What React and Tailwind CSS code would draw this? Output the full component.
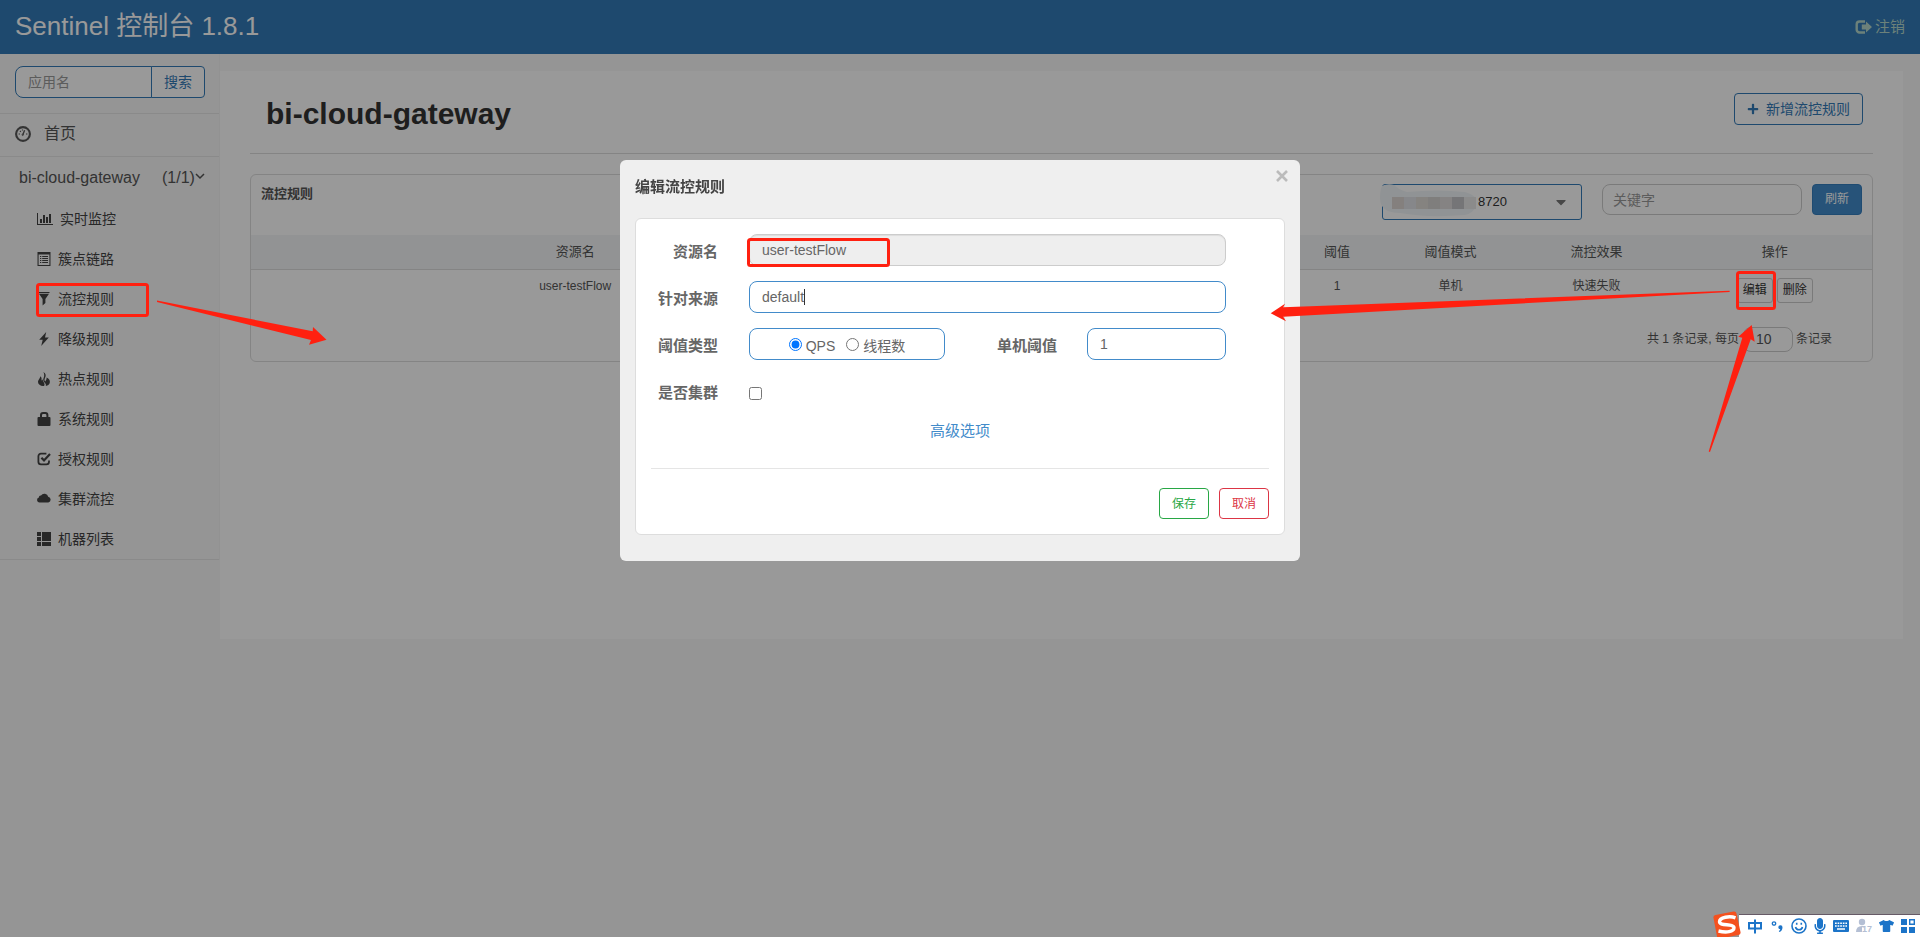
import React from "react";
import { FaPlus, FaCaretDown, FaTshirt, FaMicrophone } from "react-icons/fa";

function GaugeIcon({ className }) {
  return (
    <svg viewBox="0 0 16 16" className={className} fill="none" stroke="currentColor">
      <circle cx="8" cy="8" r="6.900" strokeWidth="2.100" />
      <path d="M7.800 8.800 9.600 4.200" strokeWidth="1.300" />
      <circle cx="7.700" cy="8.800" r="0.700" strokeWidth="0.900" />
      <path d="M3.600 8h1.400M5 5l.8.8M7.500 3.500v1.100M11 8h1.400" strokeWidth="1.200" />
    </svg>
  );
}

function ChartIcon({ className }) {
  return (
    <svg viewBox="0 0 16 14" className={className} fill="currentColor">
      <path d="M0 1h1v11h15v1H0zM3 7h2v4H3zM6 3h2v8H6zM9 5h2v6H9zM12 2h2v9h-2z" />
    </svg>
  );
}

function ListAltIcon({ className }) {
  return (
    <svg viewBox="0 0 14 14" className={className} fill="currentColor">
      <path fillRule="evenodd" d="M.5 0h13v14H.5zM1.600 2.400v10.500h10.800V2.400z" />
      <path d="M3 4h1.300v1H3zM5.200 4H11v1H5.200zM3 6h1.300v1H3zM5.200 6H11v1H5.200zM3 8h1.300v1H3zM5.200 8H11v1H5.200zM3 10h1.300v1H3zM5.200 10H11v1H5.200z" />
    </svg>
  );
}

function FunnelIcon({ className }) {
  return (
    <svg viewBox="0 0 14 14" className={className} fill="currentColor">
      <path d="M1.500 0h11v1h-11zM2 1.800h10L8.400 7v4L5.600 13.500V7z" />
    </svg>
  );
}

function FlashIcon({ className }) {
  return (
    <svg viewBox="0 0 14 14" className={className} fill="currentColor">
      <path d="M9.200 0 2.200 7.800h3.500L4.200 14l7.600-8.600H8z" />
    </svg>
  );
}

function FireIcon({ className }) {
  return (
    <svg viewBox="0 0 14 14" className={className} fill="currentColor">
      <path d="M6.400 0C9 1.500 9.300 3.800 8 6c-.7 1.300-.6 2.600.2 3.600.5-1.200 1.600-2.100 1.400-4.200C11.500 6 13 8 12.900 10c-.1 2.300-1.900 3.700-4.100 4 .4-1.200-.1-2.200-1-3.200C6.300 9.300 5.800 7.800 6.600 6 7.500 4 7.400 2 6.400 0z" />
      <path d="M3.500 4.200c1.400 1.500 1.200 3 .8 4.400.6-.2 1-.6 1.300-1.300.1 1.500.8 2.600 1.500 3.700.6 1 .6 2-.1 3C4 14.200 1.200 12.800 1 10c-.1-2.200 2-3.300 2.500-5.800z" />
    </svg>
  );
}

function LockIcon({ className }) {
  return (
    <svg viewBox="0 0 14 14" className={className} fill="currentColor">
      <path
        fillRule="evenodd"
        d="M3 5V3a3 3 0 0 1 3-3h2.400a3 3 0 0 1 3 3v2h1.100a1 1 0 0 1 1 1v7a1 1 0 0 1-1 1H1.500a1 1 0 0 1-1-1V6a1 1 0 0 1 1-1zM5 5h4.400V3.200A1.200 1.200 0 0 0 8.200 2h-2A1.200 1.200 0 0 0 5 3.200z"
      />
    </svg>
  );
}

function CheckIcon({ className }) {
  return (
    <svg viewBox="0 0 14 14" className={className} fill="none" stroke="currentColor">
      <path d="M9.400 1.700H4A2.600 2.600 0 0 0 1.400 4.300v5.400A2.600 2.600 0 0 0 4 12.300h5.400a2.600 2.600 0 0 0 2.600-2.600V8.600" strokeWidth="1.800" />
      <path d="M4.400 5.800 7 8.400l6-6.400" strokeWidth="2.200" />
    </svg>
  );
}

function CloudIcon({ className }) {
  return (
    <svg viewBox="0 0 14 14" className={className} fill="currentColor">
      <path d="M2.700 10.500A2.500 2.500 0 0 1 1.900 5.600 1.900 1.900 0 0 1 4 3.600 3.900 3.900 0 0 1 11.200 4.800 2.900 2.900 0 0 1 11.300 10.500z" />
    </svg>
  );
}

function MachineIcon({ className }) {
  return (
    <svg viewBox="0 0 14 14" className={className} fill="currentColor">
      <path d="M0 0h4v4H0zM0 5h4v4H0zM0 10h4v4H0zM5 0h9v9H5zM5 10h9v4H5z" />
    </svg>
  );
}

function LogoutIcon({ className }) {
  return (
    <svg viewBox="0 0 17 14" className={className} fill="none" stroke="currentColor">
      <path d="M10 1.500H4.500a2.800 2.800 0 0 0-2.800 2.800v5.400a2.800 2.800 0 0 0 2.800 2.800H10" strokeWidth="2.400" />
      <path d="M6.800 4.600h4.200V1.400L17 7l-6 5.600V9.400H6.800z" fill="currentColor" stroke="none" />
    </svg>
  );
}

const MENU = [
  { label: "实时监控", Icon: ChartIcon, wide: true },
  { label: "簇点链路", Icon: ListAltIcon },
  { label: "流控规则", Icon: FunnelIcon },
  { label: "降级规则", Icon: FlashIcon },
  { label: "热点规则", Icon: FireIcon },
  { label: "系统规则", Icon: LockIcon },
  { label: "授权规则", Icon: CheckIcon },
  { label: "集群流控", Icon: CloudIcon },
  { label: "机器列表", Icon: MachineIcon },
];

function Header() {
  return (
    <header className="flex h-[54px] items-center justify-between bg-[#337ab7] px-[15px]">
      <h1 className="pb-[3px] text-[26px] leading-8 text-white">Sentinel 控制台 1.8.1</h1>
      <a href="#logout" className="flex items-center gap-[3px] text-[15px] text-[#b4d8cc]">
        <LogoutIcon className="h-[14px] w-[17px]" />
        注销
      </a>
    </header>
  );
}

function Sidebar() {
  return (
    <nav className="w-[220px] shrink-0 border-r border-[#f4f4f4] text-[#555]">
      <form className="flex h-[59px] pt-3 pr-[14px] pl-[15px]" onSubmit={(e) => e.preventDefault()}>
        <input
          aria-label="应用名"
          placeholder="应用名"
          className="h-8 w-[137px] rounded-l-lg border border-[#337ab7] bg-white px-3 text-sm placeholder:text-[#999]"
        />
        <button className="-ml-px h-8 flex-1 rounded-r border border-[#337ab7] bg-white text-sm text-[#337ab7]">
          搜索
        </button>
      </form>
      <a href="#home" className="flex h-[43px] items-center gap-[13px] border-t border-[#e7e7e7] px-[15px] pb-[2px] text-base">
        <GaugeIcon className="h-4 w-4" />
        首页
      </a>
      <div className="border-y border-[#e7e7e7]">
        <a href="#app" className="flex h-[42px] items-center pl-[19px] text-base">
          <span className="w-[143px]">bi-cloud-gateway</span>
          <span>(1/1)</span>
          <svg viewBox="0 0 10 10" className="mb-1 h-[10px] w-[10px]" fill="none" stroke="currentColor" strokeWidth="1.500">
            <path d="M1 3l4 4 4-4" />
          </svg>
        </a>
        <ul>
          {MENU.map(({ label, Icon, wide }) => (
            <li key={label}>
              <a href={"#" + label} className="flex h-10 items-center gap-[7px] pb-px pl-[37px] text-sm text-[#444]">
                <Icon className={wide ? "h-[14px] w-4" : "h-[14px] w-[14px]"} />
                {label}
              </a>
            </li>
          ))}
        </ul>
      </div>
    </nav>
  );
}

function RulesPanel() {
  return (
    <section className="rounded-md border border-[#ddd] text-[#555]">
      <div className="flex h-[60px] items-start pt-[9px] pr-[10px] pl-[10px]">
        <h2 className="mr-auto text-[13px] leading-5 font-bold">流控规则</h2>
        <div className="relative mr-5 w-[200px]">
          <select
            aria-label="机器"
            className="h-9 w-full appearance-none rounded-[3px] border border-[#337ab7] bg-white pl-[95px] text-[13px] text-[#333]"
          >
            <option>8720</option>
          </select>
          <FaCaretDown className="pointer-events-none absolute top-[10px] right-[13px] h-4 w-4 text-[#777]" />
          <svg viewBox="0 0 98 36" className="pointer-events-none absolute top-0 -left-[2px] h-9 w-[98px]">
            <path d="M2 2Q8-1 14 1q5 5 13 7 30-3 58 0 13 3 11 13-2 8-11 10-38 3-65-2Q0 29 0 14 0 6 2 2z" fill="#f1f6f9" />
            <path d="M12 13h12v12H12z" fill="#dcd6d2" />
            <path d="M24 13h12v12H24z" fill="#e0e1e6" />
            <path d="M36 13h12v12H36z" fill="#dedad6" />
            <path d="M48 13h12v12H48z" fill="#d4d2d0" />
            <path d="M60 13h12v12H60z" fill="#dedbda" />
            <path d="M72 13h12v12H72z" fill="#c4c4c6" />
            <path d="M84 13h12v12H84z" fill="#e8e8e8" />
          </svg>
        </div>
        <input
          aria-label="关键字"
          placeholder="关键字"
          className="mr-[10px] h-[31px] w-[200px] rounded-lg border border-[#ccc] bg-white px-[10px] text-sm placeholder:text-[#999]"
        />
        <button className="h-[31px] w-[50px] rounded border border-[#357ebd] bg-[#428bca] pb-px text-xs text-white">
          刷新
        </button>
      </div>
      <table className="w-full table-fixed text-center">
        <thead className="bg-[#f3f5f7] text-[13px]">
          <tr className="h-[34px] border-b border-[#ddd]">
            <th className="w-[40%] font-normal">资源名</th>
            <th className="w-[8%] font-normal">来源应用</th>
            <th className="w-[8%] font-normal">流控模式</th>
            <th className="w-[8%] font-normal">阈值类型</th>
            <th className="w-[6%] font-normal">阈值</th>
            <th className="w-[8%] font-normal">阈值模式</th>
            <th className="w-[10%] font-normal">流控效果</th>
            <th className="w-[12%] font-normal">操作</th>
          </tr>
        </thead>
        <tbody className="text-xs">
          <tr className="h-[42px] align-top leading-4 [&>td]:pt-2">
            <td>user-testFlow</td>
            <td>default</td>
            <td>直接</td>
            <td>QPS</td>
            <td>1</td>
            <td>单机</td>
            <td>快速失败</td>
            <td>
              <div className="flex justify-center gap-1">
                <button className="h-[25px] w-9 rounded-[3px] border border-[#ccc] text-[#333]">编辑</button>
                <button className="h-[25px] w-9 rounded-[3px] border border-[#ccc] text-[#333]">删除</button>
              </div>
            </td>
          </tr>
        </tbody>
      </table>
      <div className="flex h-[50px] items-center justify-end pt-[6px] pr-10 text-xs">
        <label htmlFor="page-size">共 1 条记录, 每页</label>
        <input
          id="page-size"
          defaultValue="10"
          className="mr-[3px] ml-1 h-[25px] w-[50px] rounded-lg border border-[#ccc] bg-white pl-3 text-sm"
        />
        <span>条记录</span>
      </div>
    </section>
  );
}

function Field({ label, htmlFor, children }) {
  return (
    <div className="flex h-8 items-start">
      <label htmlFor={htmlFor} className="w-[67px] pt-[7px] text-right text-[15px] leading-[22px] font-bold text-[#666]">
        {label}
      </label>
      <div className="ml-[31px] flex flex-1 items-start">{children}</div>
    </div>
  );
}

function EditDialog() {
  return (
    <div role="dialog" aria-labelledby="dialog-title" className="w-[680px] rounded-md bg-[#efefef] px-[15px] pb-[26px]">
      <div className="relative flex h-[58px] items-center">
        <h2 id="dialog-title" className="pb-1 text-[15px] font-bold text-[#444]">
          编辑流控规则
        </h2>
        <button aria-label="关闭" className="absolute top-[10px] -right-[3px] text-[#bbb]">
          <svg viewBox="0 0 12 12" className="h-3 w-3" stroke="currentColor" strokeWidth="2.600" fill="none">
            <path d="M1 1l10 10M11 1L1 11" />
          </svg>
        </button>
      </div>
      <div className="rounded-md border border-[#ddd] bg-white p-[15px] text-sm text-[#666]">
        <div className="flex flex-col gap-[15px] pr-[43px]">
          <Field label="资源名" htmlFor="resource">
            <input
              id="resource"
              disabled
              defaultValue="user-testFlow"
              className="h-8 w-full rounded-lg border border-[#ccc] bg-[#eee] px-3 shadow-[inset_0_1px_1px_rgba(0,0,0,0.075)]"
            />
          </Field>
          <Field label="针对来源" htmlFor="origin">
            <div className="relative w-full">
              <input id="origin" defaultValue="default" className="h-8 w-full rounded-lg border border-[#428bca] px-3" />
              <span className="absolute top-2 left-[55px] h-4 w-px bg-[#333]" />
            </div>
          </Field>
          <Field label="阈值类型">
            <div className="flex h-8 w-[196px] items-center justify-center gap-[11px] rounded-lg border border-[#428bca] pt-1">
              <label className="flex items-center gap-1">
                <input type="radio" name="grade" defaultChecked className="mb-1 h-[13px] w-[13px] accent-[#0075ff]" />
                QPS
              </label>
              <label className="flex items-center gap-1">
                <input type="radio" name="grade" className="mb-1 h-[13px] w-[13px]" />
                线程数
              </label>
            </div>
            <label htmlFor="count" className="ml-auto pt-[7px] text-[15px] leading-[22px] font-bold">
              单机阈值
            </label>
            <input id="count" defaultValue="1" className="ml-[30px] h-8 w-[139px] rounded-lg border border-[#428bca] px-3" />
          </Field>
          <Field label="是否集群" htmlFor="cluster">
            <input id="cluster" type="checkbox" className="mt-3 h-[13px] w-[13px]" />
          </Field>
        </div>
        <div className="mt-[13px] text-center">
          <a href="#advanced" className="text-[15px] leading-[22px] text-[#428bca]">
            高级选项
          </a>
        </div>
        <hr className="mt-[26px] mb-[19px] border-[#e5e5e5]" />
        <div className="flex justify-end gap-[10px] text-xs">
          <button className="h-[31px] w-[50px] rounded border border-[#28a745] text-[#28a745]">保存</button>
          <button className="h-[31px] w-[50px] rounded border border-[#dc3545] text-[#dc3545]">取消</button>
        </div>
      </div>
    </div>
  );
}

function Annotations() {
  return (
    <svg viewBox="0 0 1920 937" className="pointer-events-none absolute top-0 left-0 w-full" fill="#ff2010">
      <g fill="none" stroke="#ff2010" strokeWidth="3">
        <rect x="37.500" y="284.500" width="110" height="31" rx="2" />
        <rect x="748.500" y="239.500" width="140" height="26" rx="2" />
        <rect x="1737.500" y="272.500" width="37" height="36" rx="2" />
      </g>
      <path d="M157 300.500 312.700 331.300 313 327 326.500 339.700 309 344.700 311 340 157 302z" />
      <path d="M1729.600 290.700 1283.300 307.300 1285 303.700 1270.700 313.300 1286 321.300 1283.300 316.700 1729.600 291.900z" />
      <path d="M1708.700 451.500 1742.300 337.700 1738.300 336.700 1751.700 325 1754.700 341.700 1750.700 339.300 1710 452z" />
    </svg>
  );
}

function InputMethodBar() {
  return (
    <div className="fixed right-0 bottom-0 flex h-[23px] w-[181px] items-center border-t border-[#665a66] bg-white text-[#1c74c8]">
      <svg viewBox="0 0 28 26" className="absolute bottom-0 -left-[26px] h-[26px] w-7">
        <path d="M.5 7Q0 4.500 2.500 4L20.500.5q2.500-.5 3 2L27.500 21q.5 2.500-2 3L7 27.500q-2.500.5-3-2z" fill="#f4511e" />
        <path d="M22.500 6.800C17 4.800 6.500 6 6.500 10.800c0 4.600 14.500 1.400 14.500 6 0 4.200-8 5-15.500 3.200" fill="none" stroke="#fff" strokeWidth="3.400" />
      </svg>
      <div className="flex w-full items-center justify-between pr-[5px] pl-2">
        <svg viewBox="0 0 16 16" className="h-4 w-4" fill="none" stroke="currentColor" strokeWidth="2">
          <path d="M2 5h12v5.500H2zM8 1.500v14" />
        </svg>
        <svg viewBox="0 0 14 14" className="h-[14px] w-[14px]" fill="currentColor">
          <circle cx="4" cy="4.500" r="1.700" fill="none" stroke="currentColor" strokeWidth="1.300" />
          <path d="M10.300 6.200a2.100 2.100 0 0 1 2.200 2.200c0 2.200-1.400 4-3.200 4.600l-.5-1c.9-.5 1.400-1.100 1.500-1.800a2 2 0 0 1 0-4z" />
        </svg>
        <svg viewBox="0 0 16 16" className="h-4 w-4" fill="none" stroke="currentColor" strokeWidth="1.600">
          <circle cx="8" cy="8" r="7" />
          <path d="M4.500 9a3.600 3.600 0 0 0 7 0M5.700 4.800v2M10.300 4.800v2" />
        </svg>
        <FaMicrophone className="h-4 w-3" />
        <svg viewBox="0 0 16 12" className="h-3 w-4">
          <rect width="16" height="12" rx="1" fill="currentColor" />
          <path d="M2 3.300h12M2 6h12" stroke="#fff" strokeWidth="1.500" strokeDasharray="1.700 .9" />
          <path d="M4 9h8" stroke="#fff" strokeWidth="1.500" />
        </svg>
        <div className="relative h-4 w-4 text-[#b4bfd4]">
          <svg viewBox="0 0 16 16" className="h-4 w-4" fill="currentColor">
            <circle cx="6" cy="4" r="3.200" />
            <path d="M0 14q0-6 6-6 3 0 4 1H6v5z" />
          </svg>
          <span className="absolute right-0 bottom-0 text-[9px] leading-[9px] font-bold">17</span>
        </div>
        <FaTshirt className="h-4 w-[15px]" />
        <svg viewBox="0 0 14 14" className="h-[14px] w-[14px]" fill="currentColor">
          <path d="M0 0h6v6H0zM0 8h6v6H0zM8 8h6v6H8z" />
          <path d="M8.700.7h4.600v4.600H8.700z" fill="none" stroke="currentColor" strokeWidth="1.400" />
        </svg>
      </div>
    </div>
  );
}

export default function App() {
  return (
    <div className="relative min-h-screen bg-[#f8f8f8] font-['Liberation_Sans','Noto_Sans_CJK_SC',sans-serif]">
      <Header />
      <div className="flex items-start">
        <Sidebar />
        <main className="mt-[17px] mr-[17px] min-h-[568px] flex-1 bg-white px-[30px]">
          <div className="mb-5 flex h-[83px] items-start justify-between border-b border-[#ddd] pr-[10px] pl-4">
            <h2 className="pt-[25px] text-3xl font-bold text-[#333]">bi-cloud-gateway</h2>
            <button className="mt-[22px] flex h-8 w-[129px] items-center justify-center gap-[7px] rounded border border-[#337ab7] text-sm text-[#337ab7]">
              <FaPlus className="h-3 w-3" />
              新增流控规则
            </button>
          </div>
          <RulesPanel />
        </main>
      </div>
      <div className="fixed inset-0 flex items-start justify-center bg-black/40 pt-40">
        <EditDialog />
      </div>
      <Annotations />
      <InputMethodBar />
    </div>
  );
}
